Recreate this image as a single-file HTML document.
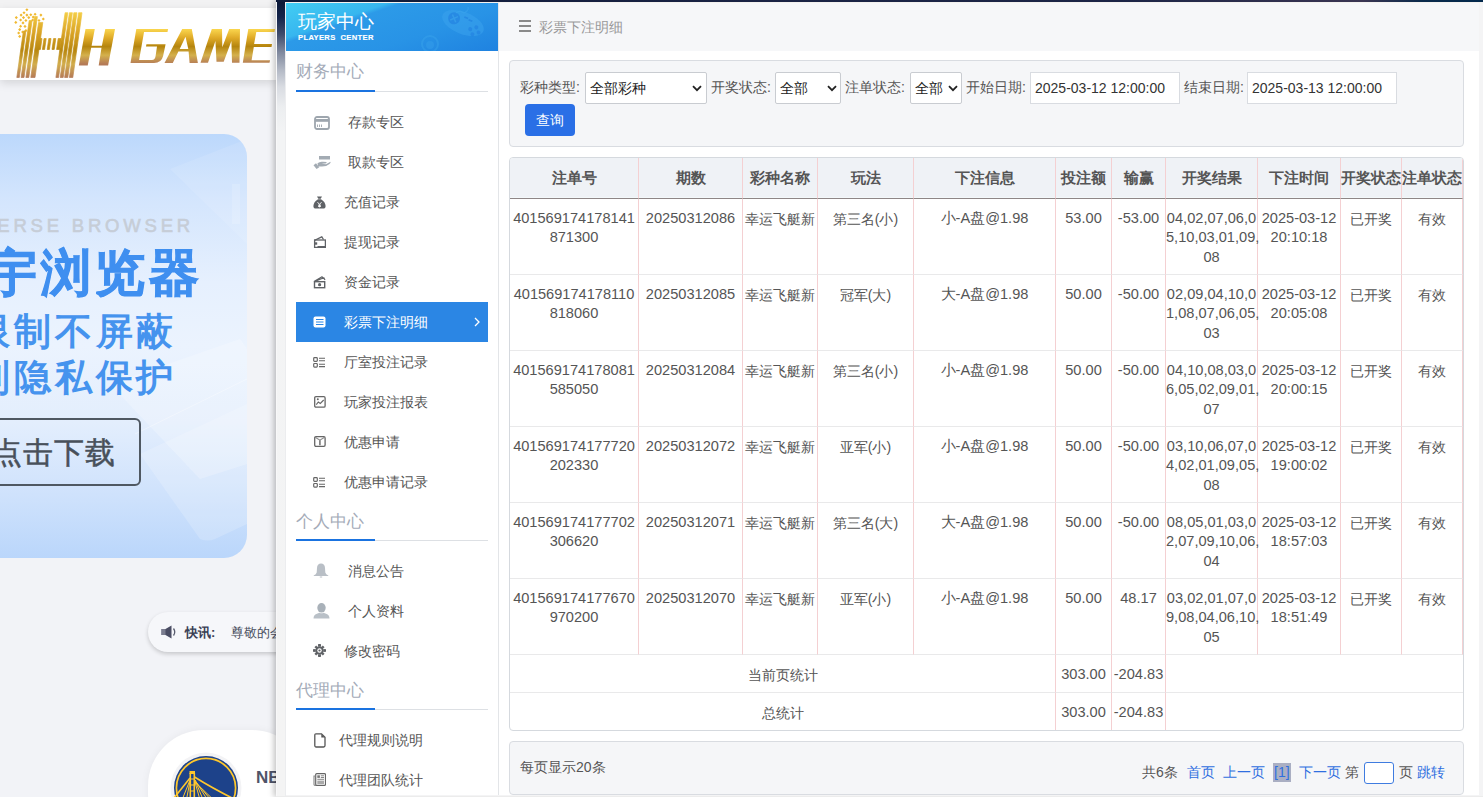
<!DOCTYPE html>
<html><head><meta charset="utf-8">
<style>
*{box-sizing:border-box;margin:0;padding:0}
html,body{width:1484px;height:797px;overflow:hidden;background:#f2f3f7;font-family:"Liberation Sans",sans-serif;color:#555}
.abs{position:absolute}
/* background page */
#topstrip{left:0;top:0;width:276px;height:8px;background:#f2f2f3}
#hdr{left:0;top:8px;width:276px;height:72px;background:#fff;box-shadow:0 3px 9px rgba(0,0,0,.13)}
#banner{left:-30px;top:134px;width:277px;height:424px;border-radius:23px;background:linear-gradient(180deg,#bcd8fc 0%,#d3e5fd 15%,#e6f0fe 35%,#ebf3fe 50%,#e3eefd 68%,#cfe2fc 85%,#bad6fb 100%);overflow:hidden}
#notice{left:148px;top:612px;width:160px;height:40px;border-radius:20px;background:#f6f7fa;box-shadow:0 2px 4px rgba(0,0,0,.18)}
#card{left:148px;top:730px;width:160px;height:120px;border-radius:56px;background:#fff;box-shadow:0 0 8px rgba(0,0,0,.05)}
/* popup */
#frame{left:276px;top:0;width:1207px;height:797px;background:#f4f4f5;box-shadow:-2px 0 6px rgba(0,0,0,.25)}
#frtop{left:276px;top:0;width:1207px;height:2px;background:linear-gradient(90deg,#0e1b3a 0%,#1a2344 40%,#1c2547 70%,#3a3552 90%,#0a2a4c 95%,#02284c 100%)}
#frline{left:276px;top:2px;width:1207px;height:1px;background:#f3f1ee}
#frleft{left:277px;top:2px;width:8px;height:795px;background:linear-gradient(180deg,#0b1836 0px,#14244a 15px,#3e4b6b 32px,#7f889d 50px,#b3b9c5 68px,#d9dce2 85px,#eceef0 105px,#f3f4f5 130px,#f4f4f4 797px)}
#frl1{left:276px;top:2px;width:1px;height:795px;background:#f8f8f9}
#frl2{left:285px;top:3px;width:1px;height:794px;background:#ecedef}
#frbot{left:276px;top:796px;width:1207px;height:1px;background:#ececec}
#frright{left:1483px;top:0;width:1px;height:797px;background:#fff}
#side{left:286px;top:3px;width:212px;height:792px;background:#fff}
#sidehd{left:0;top:0;width:212px;height:48px;background:linear-gradient(161deg,#42cdf3 0%,#37b6ef 29%,#2c9ae8 33%,#2893e6 65%,#1f82e0 100%);overflow:hidden}
#main{left:498px;top:3px;width:981px;height:792px;background:#fff;border-left:1px solid #e3e5e8}
#mainhd{left:0;top:0;width:980px;height:48px;background:#f6f7f9}
.sec{position:absolute;left:10px;font-size:17px;line-height:20px;color:#a4abb8}
.secline{position:absolute;left:10px;width:192px;height:1px;background:#dde0e4}
.secline i{position:absolute;left:0;top:-1px;width:79px;height:2px;background:#1a73e0}
.mi{position:absolute;left:10px;width:192px;height:40px;font-size:14px;color:#555}
.mi span{position:absolute;top:12px;line-height:16px;white-space:nowrap}
.mi svg{position:absolute}
.mi.act{background:#2b86e4;color:#fff}

#hamb{left:519px;top:20px;width:12px;height:12px}
#ptitle{left:539px;top:19px;font-size:14px;line-height:16px;color:#999}
#filter{left:509px;top:60px;width:955px;height:87px;background:#f5f6f8;border:1px solid #d9dce1;border-radius:4px}
.lbl{position:absolute;top:79px;font-size:14px;line-height:16px;color:#555;white-space:nowrap}
.sel{position:absolute;top:72px;height:32px;background:#fff;border:1px solid #c9ccd1;border-radius:2px;font-size:14px;color:#222}
.sel span{position:absolute;left:4px;top:7px;line-height:16px;white-space:nowrap}
.sel svg{position:absolute;top:12px}
.inp{position:absolute;top:72px;height:32px;background:#fff;border:1px solid #d9dce1;font-size:14px;color:#333}
.inp span{position:absolute;left:4px;top:7px;line-height:16px;white-space:nowrap}
#qbtn{left:525px;top:104px;width:50px;height:32px;background:#2a6fe6;border-radius:4px;color:#fff;font-size:14px;line-height:32px;text-align:center}
#tbl{left:509px;top:157px;width:955px;height:574px;border:1px solid #d5d9de;border-radius:4px;overflow:hidden;background:#fff}
#tbl table{border-collapse:separate;border-spacing:0;table-layout:fixed;width:953px}
#tbl th{height:41px;background:#eff2f6;font-size:15px;font-weight:bold;color:#555;border-right:1px solid #f4d0d2;border-bottom:1px solid #8e8686;box-shadow:inset 0 -1px #f3f8fa;text-align:center;padding:0;white-space:nowrap;letter-spacing:0}
#tbl td{height:76px;vertical-align:top;text-align:center;font-size:14.6px;line-height:19.25px;color:#555;border-right:1px solid #f4d0d2;border-bottom:1px solid #e9e9ea;padding:10px 0 0 0;white-space:nowrap;letter-spacing:0}
#tbl tr.sum td{height:38px;vertical-align:middle;padding:0;line-height:16px}
#tbl tr.sum td.nb{border-right:none}
#tbl td.c{font-size:14px;padding-top:11px}
#tbl tr.sum td.c{padding-top:2px}
#tbl tr.last td{height:37px;border-bottom:none}
#pager{left:509px;top:741px;width:955px;height:54px;background:#f5f6f8;border:1px solid #d9dce1;border-radius:4px;font-size:14px;color:#555}
#pager span{position:absolute;top:22px;line-height:16px;white-space:nowrap}
#pager .lk{color:#2f6fe0}
</style></head><body>
<div id="topstrip" class="abs"></div>
<div id="hdr" class="abs"></div>
<svg class="abs" style="left:0;top:0" width="276" height="80" viewBox="0 0 276 80">
<defs>
<linearGradient id="g1" x1="0" y1="9" x2="0" y2="78" gradientUnits="userSpaceOnUse"><stop offset="0" stop-color="#f9d54c"/><stop offset=".35" stop-color="#d9a325"/><stop offset=".6" stop-color="#b8870f"/><stop offset=".8" stop-color="#d2ad4c"/><stop offset="1" stop-color="#b47958"/></linearGradient>
<linearGradient id="g2" x1="0" y1="29" x2="0" y2="64" gradientUnits="userSpaceOnUse"><stop offset="0" stop-color="#fad64e"/><stop offset=".25" stop-color="#e0ab28"/><stop offset=".5" stop-color="#b5850e"/><stop offset=".75" stop-color="#d4b04c"/><stop offset="1" stop-color="#b47a57"/></linearGradient>
</defs>
<g fill="#f0b931"><rect x="25.8" y="8.7" width="2.2" height="2.2" transform="rotate(45 26.9 9.8)"/><rect x="22.9" y="11.6" width="2.2" height="2.2" transform="rotate(45 24.0 12.7)"/><rect x="20.0" y="14.0" width="2.2" height="2.2" transform="rotate(45 21.1 15.1)"/><rect x="25.8" y="14.0" width="2.2" height="2.2" transform="rotate(45 26.9 15.1)"/><rect x="29.7" y="13.6" width="2.2" height="2.2" transform="rotate(45 30.8 14.7)"/><rect x="34.0" y="13.1" width="2.2" height="2.2" transform="rotate(45 35.1 14.2)"/><rect x="39.8" y="14.0" width="2.2" height="2.2" transform="rotate(45 40.9 15.1)"/><rect x="15.2" y="16.5" width="2.2" height="2.2" transform="rotate(45 16.3 17.6)"/><rect x="22.4" y="16.5" width="2.2" height="2.2" transform="rotate(45 23.5 17.6)"/><rect x="27.7" y="16.5" width="2.2" height="2.2" transform="rotate(45 28.8 17.6)"/><rect x="32.1" y="16.0" width="2.2" height="2.2" transform="rotate(45 33.2 17.1)"/><rect x="42.2" y="17.9" width="2.2" height="2.2" transform="rotate(45 43.3 19.0)"/><rect x="19.5" y="18.9" width="2.2" height="2.2" transform="rotate(45 20.6 20.0)"/><rect x="24.8" y="19.4" width="2.2" height="2.2" transform="rotate(45 25.9 20.5)"/><rect x="31.6" y="18.9" width="2.2" height="2.2" transform="rotate(45 32.7 20.0)"/><rect x="37.9" y="19.4" width="2.2" height="2.2" transform="rotate(45 39.0 20.5)"/><rect x="14.7" y="21.3" width="2.2" height="2.2" transform="rotate(45 15.8 22.4)"/><rect x="21.9" y="21.8" width="2.2" height="2.2" transform="rotate(45 23.0 22.9)"/><rect x="19.5" y="25.2" width="2.2" height="2.2" transform="rotate(45 20.6 26.3)"/><rect x="23.9" y="25.3" width="2.2" height="2.2" transform="rotate(45 25.0 26.4)"/><rect x="18.6" y="28.5" width="2.2" height="2.2" transform="rotate(45 19.7 29.6)"/><rect x="24.8" y="29.5" width="2.2" height="2.2" transform="rotate(45 25.9 30.6)"/><rect x="17.6" y="31.9" width="2.2" height="2.2" transform="rotate(45 18.7 33.0)"/><rect x="21.5" y="30.9" width="2.2" height="2.2" transform="rotate(45 22.6 32.0)"/><rect x="18.6" y="35.3" width="2.2" height="2.2" transform="rotate(45 19.7 36.4)"/></g>
<g fill="url(#g1)" stroke="url(#g1)" stroke-width="0.7"><polygon points="16.8,77.5 19.3,77.5 25.9,31 23.4,31"/><polygon points="21.1,77.5 24.0,77.5 32.1,20.5 29.2,20.5"/><polygon points="25.9,77.5 28.8,77.5 37.4,16.6 34.5,16.6"/><polygon points="30.8,77.5 35.0,77.5 42.8,22.4 38.6,22.4"/><polygon points="55.9,77.5 58.6,77.5 67.8,12.7 65.1,12.7"/><polygon points="60.2,77.5 63.2,77.5 72.4,12.7 69.4,12.7"/><polygon points="64.6,77.5 67.8,77.5 77.0,12.7 73.8,12.7"/><polygon points="69.4,77.5 72.8,77.5 82.0,12.7 78.6,12.7"/><polygon points="37.2,49.5 40.4,49.5 42.0,38.5 38.8,38.5"/><polygon points="42.4,49.5 44.6,49.5 46.2,38.5 44.0,38.5"/><polygon points="47.2,49.5 49.4,49.5 51.0,38.5 48.8,38.5"/><polygon points="52.0,49.5 54.2,49.5 55.8,38.5 53.6,38.5"/><polygon points="56.6,49.5 59.8,49.5 61.4,38.5 58.2,38.5"/></g>
<g fill="url(#g2)">
<polygon points="85.5,29.1 94.8,29.1 91.6,45.8 101.9,45.8 105.3,29.1 115,29.1 108.1,65.4 98.7,65.4 101.5,47.7 91.2,47.7 87.7,65.4 78.8,65.4"/>
<path d="M136.3,29 L168.1,29 L167.5,32 L144.05,32 L139.1,59.9 L152,59.9 Q155,59.9 155.6,56 L157,46.6 L146,46.6 L146.4,44.2 L165.6,44.2 L163.1,56 Q161.5,62.9 154,62.9 L130.5,62.9 Z"/>
<path d="M164.5,62.9 L182.2,29 L191.8,29 L197.9,62.9 L189.6,62.9 L188.6,51.6 L178.4,51.6 L172.8,62.9 Z M179.7,49.1 L188.3,49.1 L185.5,36.7 Z" fill-rule="evenodd"/>
<path d="M200.5,62.7 L211.8,29 L222,29 L222.3,47.2 L229.2,29 L240,29 L239.5,62.7 L232,62.7 L231.4,41.1 L223.7,61.8 L216.5,61.8 L215.4,41.1 L208,62.7 Z"/>
<path d="M248.3,29 L275,29 L274.5,32 L256.3,32 L254.1,43.9 L272,43.9 L271.5,46.9 L253.8,46.9 L251.6,60.2 L270.1,60.2 L269.5,62.7 L242.8,62.7 Z"/>
</g>
</svg>
<div id="banner" class="abs">
  <svg class="abs" style="left:0;top:0" width="277" height="424" viewBox="0 0 277 424">
    <path d="M140 250 L270 205 L277 215 L277 330 L230 345 Z" fill="#ffffff" opacity=".22"/>
    <path d="M170 320 L277 270 L277 390 L245 405 Q238 408 230 405 Z" fill="#ffffff" opacity=".18"/>
    <path d="M165 300 L277 245" stroke="#ffffff" stroke-width="1" opacity=".35"/>
    <path d="M200 35 L277 5 L277 110 Z" fill="#ffffff" opacity=".10"/>
    <rect x="262" y="50" width="8" height="40" fill="#ffffff" opacity=".15"/>
  </svg>
  <div class="abs" style="right:53px;top:82px;font-size:18.5px;line-height:20px;font-weight:normal;-webkit-text-stroke:.6px #c6cdd7;color:#c6cdd7;letter-spacing:3.8px;white-space:nowrap">UNIVERSE BROWSER</div>
  <div class="abs" style="right:44px;top:111px;font-size:50px;line-height:56px;font-weight:900;color:#3f8ff0;white-space:nowrap;letter-spacing:4px;-webkit-text-stroke:1px #3f8ff0">元宇浏览器</div>
  <div class="abs" style="right:70px;top:176px;font-size:37px;line-height:44px;font-weight:bold;color:#4593ee;white-space:nowrap;letter-spacing:3.7px;white-space:nowrap">无限制不屏蔽</div>
  <div class="abs" style="right:70px;top:222px;font-size:37px;line-height:44px;font-weight:bold;color:#4593ee;white-space:nowrap;letter-spacing:3.7px;white-space:nowrap">强到隐私保护</div>
  <div class="abs" style="left:0;top:284px;width:171px;height:68px;border:2px solid #4f5862;border-radius:6px"></div>
  <div class="abs" style="right:131px;top:300px;font-size:30px;line-height:38px;font-weight:500;color:#48505a;-webkit-text-stroke:.5px #48505a;white-space:nowrap;letter-spacing:1px">点击下载</div>
</div>

<div id="notice" class="abs">
  <svg class="abs" style="left:13px;top:13px" width="17" height="14" viewBox="0 0 17 14"><path d="M0.5 4 H4.5 L10.5 0.5 V13.5 L4.5 10 H0.5Z" fill="#4a4d63"/><rect x="0.5" y="4" width="4" height="6" fill="#7a7d8f"/><path d="M12.5 3.5 Q15 7 12.5 10.5" fill="none" stroke="#585c6e" stroke-width="1.3"/></svg>
  <div class="abs" style="left:37px;top:13px;font-size:13px;line-height:16px;font-weight:bold;color:#3a3f55;white-space:nowrap">快讯:</div>
  <div class="abs" style="left:83px;top:13px;font-size:13px;line-height:16px;color:#4a4f60;white-space:nowrap">尊敬的会员</div>
</div>
<div id="card" class="abs">
  <svg class="abs" style="left:22px;top:22px" width="72" height="72" viewBox="0 0 72 72">
    <circle cx="36" cy="36" r="35.5" fill="#f3f3f5"/>
    <circle cx="36" cy="36" r="32" fill="#1d428a"/>
    <circle cx="36" cy="36" r="29.6" fill="none" stroke="#ffc72c" stroke-width="1.7"/>
    <g stroke="#ffc72c" fill="none">
      <path d="M20.3 21 V60 M24.3 21 V60" stroke-width="1.6"/>
      <path d="M20.3 27 h4 M20.3 33 h4 M20.3 39 h4" stroke-width="1.2"/>
      <path d="M24.5 25 Q42 36 66 48" stroke-width="1.6"/>
      <path d="M20 26 Q12 36 4 46" stroke-width="1.6"/>
      <path d="M25 28 L34 50 M25 28 L40 52 M25 29 L46 54 M25 30 L52 56 M25 30 L30 48" stroke-width="1"/>
      <path d="M20 28 L12 48 M20 29 L16 50" stroke-width="1"/>
    </g>
    <rect x="19.5" y="19" width="5.5" height="3" fill="#ffc72c"/>
  </svg>
  <div class="abs" style="left:108px;top:38px;font-size:17px;line-height:20px;font-weight:bold;color:#4f5468;white-space:nowrap">NBA</div>
</div>


<div id="frame" class="abs"></div><div id="frtop" class="abs"></div><div id="frline" class="abs"></div><div id="frleft" class="abs"></div><div id="frl1" class="abs"></div><div id="frl2" class="abs"></div><div id="frbot" class="abs"></div><div id="frright" class="abs"></div>
<div id="side" class="abs">
  <div id="sidehd" class="abs">
    <svg class="abs" style="left:0;top:0" width="212" height="48" viewBox="0 0 212 48">
      <g transform="translate(177,20) rotate(22)" opacity="1">
        <ellipse cx="0" cy="0" rx="22" ry="11" fill="#3aa3ec" opacity=".55"/>
        <circle cx="-10" cy="-1" r="6" fill="#2486e2" opacity=".8"/>
        <path d="M-13 -4 L-7 2 M-7 -4 L-13 2" stroke="#3aa3ec" stroke-width="1.5" opacity=".7"/>
        <circle cx="9" cy="3" r="2" fill="#2486e2" opacity=".8"/><circle cx="14" cy="-1" r="2" fill="#2486e2" opacity=".8"/>
        <circle cx="13" cy="7" r="2" fill="#2486e2" opacity=".8"/><circle cx="18" cy="3" r="2" fill="#2486e2" opacity=".8"/>
        <path d="M-1 -6 h4 M4 -5 h4" stroke="#2486e2" stroke-width="1.6" opacity=".8"/>
      </g>
      <path d="M170 10 q4 -3 6 -1 q2 2 5 -1 q2 -2 1 -4" fill="none" stroke="#3aa3ec" stroke-width="1.2" opacity=".6"/>
      <circle cx="144" cy="41" r="8" fill="none" stroke="#3aa3ec" stroke-width="2" opacity=".45"/>
      <circle cx="144" cy="42" r="4" fill="#3aa3ec" opacity=".4"/>
    </svg>
    <div class="abs" style="left:12px;top:8px;font-size:19px;color:#fff;line-height:22px">玩家中心</div>
    <div class="abs" style="left:12px;top:30px;font-size:7.6px;line-height:9px;font-weight:bold;-webkit-text-stroke:.15px #fff;color:#fff;letter-spacing:.35px;white-space:nowrap">PLAYERS&nbsp; CENTER</div>
  </div>
  <div class="sec" style="top:59px">财务中心</div>
  <div class="secline" style="top:88px"><i></i></div>
  <!-- items: y centers 122,162,... (abs page) -> side top 3 -->
  <div class="mi" style="top:99px"><span style="left:52px">存款专区</span><svg style="left:18px;top:14px" width="16" height="14" viewBox="0 0 16 14"><rect x="1" y="1" width="14" height="12" rx="2" fill="none" stroke="#9ea6ae" stroke-width="1.8"/><rect x="1" y="3" width="14" height="2.8" fill="#9ea6ae"/><path d="M3.5 8.5v2.5M5.5 8.5v2.5M7.5 8.5v2.5" stroke="#9ea6ae" stroke-width="0.9"/></svg></div>
  <div class="mi" style="top:139px"><span style="left:52px">取款专区</span><svg style="left:17px;top:14px" width="18" height="13" viewBox="0 0 18 13"><rect x="6" y="0" width="11" height="3.5" fill="#a3abb3"/><path d="M4.5 7.2 Q7 5.2 10 5.8 L13.5 6 Q14 7 12.5 7.6 L8.5 7.8 L13 8.2 L17.5 5.8 Q18 6.6 16.5 8 Q13.5 10.5 9 10.6 L5 10.5 Z" fill="#a3abb3"/><path d="M0.5 9.2 L3 7.3 L6.3 11.3 L3.6 13 Z" fill="#a3abb3"/></svg></div>
  <div class="mi" style="top:179px"><span style="left:48px">充值记录</span><svg style="left:17px;top:14px" width="13" height="13" viewBox="0 0 13 13"><path d="M4 0.5h5l-1.3 2.3h-2.4z M5 3.2h3 Q12.5 6 12.6 10 Q12.6 12.6 10 12.6H3Q0.4 12.6 0.4 10Q0.5 6 5 3.2z" fill="#5f6266"/><path d="M4.5 6.2 L6.5 8.4 L8.5 6.2 M6.5 8.4v3 M5 9.2h3 M5 10.4h3" stroke="#fff" stroke-width="0.9" fill="none"/></svg></div>
  <div class="mi" style="top:219px"><span style="left:48px">提现记录</span><svg style="left:17px;top:14px" width="13" height="12" viewBox="0 0 13 12"><path d="M1.2 4.5 L8.8 0.8 L10.5 3.5" fill="none" stroke="#5f6266" stroke-width="1.3"/><rect x="1.6" y="4" width="10.8" height="7.4" fill="none" stroke="#5f6266" stroke-width="1.3"/><rect x="1" y="6.3" width="3.2" height="2.4" fill="#5f6266"/><path d="M4.5 10.6h7.5" stroke="#5f6266" stroke-width="1.2"/></svg></div>
  <div class="mi" style="top:259px"><span style="left:48px">资金记录</span><svg style="left:17px;top:14px" width="13" height="13" viewBox="0 0 13 13"><path d="M1 5.5 L9 0.8 L10.5 3 M3 5 L10.8 1.8 L12 4" fill="none" stroke="#5f6266" stroke-width="1.2"/><rect x="0.8" y="5" width="11.6" height="7.4" fill="#5f6266"/><rect x="2.2" y="6.4" width="8.8" height="4.6" fill="#fff"/><circle cx="6.6" cy="8.7" r="1.6" fill="#5f6266"/></svg></div>
  <div class="mi act" style="top:299px"><span style="left:48px">彩票下注明细</span><svg style="left:17px;top:14px" width="13" height="12" viewBox="0 0 13 12"><rect x="0.5" y="0.5" width="12" height="11" rx="2" fill="#fff"/><path d="M3 3.5h7.5M3 6h7.5M3 8.5h7.5" stroke="#2b86e4" stroke-width="1"/></svg><svg style="left:178px;top:15px" width="6" height="10" viewBox="0 0 6 10"><path d="M1 1 L5 5 L1 9" fill="none" stroke="#fff" stroke-width="1.3"/></svg></div>
  <div class="mi" style="top:339px"><span style="left:48px">厅室投注记录</span><svg style="left:17px;top:15px" width="13" height="11" viewBox="0 0 13 11"><rect x="0.7" y="0.7" width="3.6" height="3.6" rx="0.8" fill="none" stroke="#666" stroke-width="1.2"/><rect x="0.7" y="6.5" width="3.6" height="3.6" rx="0.8" fill="none" stroke="#666" stroke-width="1.2"/><path d="M6 1.2h6M6 3.8h6M6 7.2h6M6 9.6h6" stroke="#666" stroke-width="1.1"/></svg></div>
  <div class="mi" style="top:379px"><span style="left:48px">玩家投注报表</span><svg style="left:18px;top:14px" width="12" height="12" viewBox="0 0 12 12"><rect x="0.7" y="0.7" width="10.4" height="10.4" rx="1.2" fill="none" stroke="#666" stroke-width="1.3"/><path d="M2.3 8.6 L4.3 6 L6.3 7.5 L9.7 4" fill="none" stroke="#666" stroke-width="1.1"/><circle cx="3.8" cy="3.3" r="1" fill="#666"/></svg></div>
  <div class="mi" style="top:419px"><span style="left:48px">优惠申请</span><svg style="left:18px;top:14px" width="12" height="11" viewBox="0 0 12 11"><rect x="0.7" y="0.7" width="10.4" height="9.6" rx="1.2" fill="none" stroke="#666" stroke-width="1.3"/><path d="M1.2 1.2 L5.9 4.2 L10.6 1.2" fill="none" stroke="#888" stroke-width="1.1"/><path d="M5.9 4.2 v5" stroke="#777" stroke-width="1.6"/></svg></div>
  <div class="mi" style="top:459px"><span style="left:48px">优惠申请记录</span><svg style="left:17px;top:15px" width="13" height="11" viewBox="0 0 13 11"><rect x="0.7" y="0.7" width="3.6" height="3.6" rx="0.8" fill="none" stroke="#666" stroke-width="1.2"/><rect x="0.7" y="6.5" width="3.6" height="3.6" rx="0.8" fill="none" stroke="#666" stroke-width="1.2"/><path d="M6 1.2h6M6 3.8h6M6 7.2h6M6 9.6h6" stroke="#666" stroke-width="1.1"/></svg></div>
  <div class="sec" style="top:509px">个人中心</div>
  <div class="secline" style="top:537px"><i></i></div>
  <div class="mi" style="top:548px"><span style="left:52px">消息公告</span><svg style="left:17px;top:12px" width="16" height="15" viewBox="0 0 16 15"><path d="M8 0.5 Q11.8 0.5 12 5 L12.3 9.5 Q12.8 11.5 15.3 12.5 L15.3 13 L0.7 13 L0.7 12.5 Q3.2 11.5 3.7 9.5 L4 5 Q4.2 0.5 8 0.5z" fill="#b9bfc6"/><path d="M6.8 14h2.4" stroke="#b9bfc6" stroke-width="1"/></svg></div>
  <div class="mi" style="top:588px"><span style="left:52px">个人资料</span><svg style="left:17px;top:12px" width="17" height="16" viewBox="0 0 17 16"><ellipse cx="8.5" cy="4.8" rx="4.2" ry="4.8" fill="#a9b1b9"/><path d="M0.5 15.5 Q0.5 11.5 4.5 10.5 L6.5 9.7 Q8.5 10.7 10.5 9.7 L12.5 10.5 Q16.5 11.5 16.5 15.5z" fill="#b9c0c7"/></svg></div>
  <div class="mi" style="top:628px"><span style="left:48px">修改密码</span><svg style="left:17px;top:13px" width="13" height="13" viewBox="0 0 13 13"><g fill="#5f6266"><circle cx="6.5" cy="6.5" r="4.3"/><path d="M5.2 0h2.6l.3 2.5h-3.2zM5.2 13h2.6l.3-2.5h-3.2zM0 5.2v2.6l2.5.3v-3.2zM13 5.2v2.6l-2.5.3v-3.2z"/><path d="M1.4 3.2 L3.2 1.4 L4.8 3.4 L3.4 4.8z M11.6 9.8 L9.8 11.6 L8.2 9.6 L9.6 8.2z M9.8 1.4 L11.6 3.2 L9.6 4.8 L8.2 3.4z M3.2 11.6 L1.4 9.8 L3.4 8.2 L4.8 9.6z"/></g><circle cx="6.5" cy="6.5" r="2.2" fill="#fff"/><circle cx="6.5" cy="6.5" r="1.1" fill="#5f6266"/></svg></div>
  <div class="sec" style="top:678px">代理中心</div>
  <div class="secline" style="top:706px"><i></i></div>
  <div class="mi" style="top:717px"><span style="left:43px">代理规则说明</span><svg style="left:18px;top:13px" width="12" height="15" viewBox="0 0 12 15"><path d="M2 0.8 H7.5 L11 4.3 V12.6 Q11 14 9.6 14 H2.2 Q0.8 14 0.8 12.6 V2.2 Q0.8 0.8 2 0.8z" fill="none" stroke="#555" stroke-width="1.3"/><path d="M7.3 1 V4.5 H10.8z" fill="#555"/></svg></div>
  <div class="mi" style="top:757px"><span style="left:43px">代理团队统计</span><svg style="left:17px;top:13px" width="13" height="13" viewBox="0 0 13 13"><rect x="2.7" y="0.6" width="9.8" height="11.8" rx="1" fill="none" stroke="#666" stroke-width="1.2"/><path d="M2.7 3 H1 V11.5 Q1 12.4 2 12.4 H3" fill="none" stroke="#888" stroke-width="1.1"/><rect x="4.3" y="2.3" width="2.6" height="2.6" fill="#777"/><path d="M7.8 2.8h3.2M7.8 4.5h3.2M4.3 6.3h6.7" stroke="#777" stroke-width="0.9"/><rect x="4.3" y="7.6" width="6.7" height="3.4" fill="#aaa"/></svg></div>
</div>
<div id="main" class="abs">
  <div id="mainhd" class="abs"></div>
</div>

<svg id="hamb" class="abs" width="12" height="12" viewBox="0 0 12 12"><path d="M0 1h12M0 6h12M0 11h12" stroke="#8a8a8a" stroke-width="2"/></svg>
<div id="ptitle" class="abs">彩票下注明细</div>
<div id="filter" class="abs"></div>
<div class="lbl" style="left:520px">彩种类型:</div>
<div class="sel" style="left:585px;width:122px"><span>全部彩种</span><svg style="left:106px" width="10" height="7" viewBox="0 0 10 7"><path d="M1 1.2 L5 5.2 L9 1.2" fill="none" stroke="#222" stroke-width="1.8"/></svg></div>
<div class="lbl" style="left:711px">开奖状态:</div>
<div class="sel" style="left:775px;width:66px"><span>全部</span><svg style="left:51px" width="10" height="7" viewBox="0 0 10 7"><path d="M1 1.2 L5 5.2 L9 1.2" fill="none" stroke="#222" stroke-width="1.8"/></svg></div>
<div class="lbl" style="left:845px">注单状态:</div>
<div class="sel" style="left:910px;width:52px"><span>全部</span><svg style="left:37px" width="10" height="7" viewBox="0 0 10 7"><path d="M1 1.2 L5 5.2 L9 1.2" fill="none" stroke="#222" stroke-width="1.8"/></svg></div>
<div class="lbl" style="left:966px">开始日期:</div>
<div class="inp" style="left:1030px;width:150px"><span>2025-03-12 12:00:00</span></div>
<div class="lbl" style="left:1184px">结束日期:</div>
<div class="inp" style="left:1247px;width:150px"><span>2025-03-13 12:00:00</span></div>
<div id="qbtn" class="abs">查询</div>
<div id="tbl" class="abs"><table><colgroup><col style="width:129px"><col style="width:104px"><col style="width:75px"><col style="width:96px"><col style="width:142px"><col style="width:56px"><col style="width:54px"><col style="width:92px"><col style="width:83px"><col style="width:61px"><col style="width:61px"></colgroup><tr><th>注单号</th><th>期数</th><th>彩种名称</th><th>玩法</th><th>下注信息</th><th>投注额</th><th>输赢</th><th>开奖结果</th><th>下注时间</th><th>开奖状态</th><th>注单状态</th></tr>
<tr><td>401569174178141<br>871300</td><td>20250312086</td><td class="c">幸运飞艇新</td><td class="c">第三名(小)</td><td>小-A盘@1.98</td><td>53.00</td><td>-53.00</td><td>04,02,07,06,0<br>5,10,03,01,09,<br>08</td><td>2025-03-12<br>20:10:18</td><td class="c">已开奖</td><td class="c">有效</td></tr>
<tr><td>401569174178110<br>818060</td><td>20250312085</td><td class="c">幸运飞艇新</td><td class="c">冠军(大)</td><td>大-A盘@1.98</td><td>50.00</td><td>-50.00</td><td>02,09,04,10,0<br>1,08,07,06,05,<br>03</td><td>2025-03-12<br>20:05:08</td><td class="c">已开奖</td><td class="c">有效</td></tr>
<tr><td>401569174178081<br>585050</td><td>20250312084</td><td class="c">幸运飞艇新</td><td class="c">第三名(小)</td><td>小-A盘@1.98</td><td>50.00</td><td>-50.00</td><td>04,10,08,03,0<br>6,05,02,09,01,<br>07</td><td>2025-03-12<br>20:00:15</td><td class="c">已开奖</td><td class="c">有效</td></tr>
<tr><td>401569174177720<br>202330</td><td>20250312072</td><td class="c">幸运飞艇新</td><td class="c">亚军(小)</td><td>小-A盘@1.98</td><td>50.00</td><td>-50.00</td><td>03,10,06,07,0<br>4,02,01,09,05,<br>08</td><td>2025-03-12<br>19:00:02</td><td class="c">已开奖</td><td class="c">有效</td></tr>
<tr><td>401569174177702<br>306620</td><td>20250312071</td><td class="c">幸运飞艇新</td><td class="c">第三名(大)</td><td>大-A盘@1.98</td><td>50.00</td><td>-50.00</td><td>08,05,01,03,0<br>2,07,09,10,06,<br>04</td><td>2025-03-12<br>18:57:03</td><td class="c">已开奖</td><td class="c">有效</td></tr>
<tr><td>401569174177670<br>970200</td><td>20250312070</td><td class="c">幸运飞艇新</td><td class="c">亚军(小)</td><td>小-A盘@1.98</td><td>50.00</td><td>48.17</td><td>03,02,01,07,0<br>9,08,04,06,10,<br>05</td><td>2025-03-12<br>18:51:49</td><td class="c">已开奖</td><td class="c">有效</td></tr>
<tr class="sum"><td colspan="5" class="c">当前页统计</td><td>303.00</td><td>-204.83</td><td colspan="4" class="nb"></td></tr>
<tr class="sum last"><td colspan="5" class="c">总统计</td><td>303.00</td><td>-204.83</td><td colspan="4" class="nb"></td></tr>
</table></div>
<div id="pager" class="abs">
<span style="left:10px;top:17px">每页显示20条</span>
<span style="left:632px">共6条</span>
<span class="lk" style="left:677px">首页</span>
<span class="lk" style="left:713px">上一页</span>
<span class="lk" style="left:763px;background:#aaafc3;padding:1px 1px 0;top:21px;height:19px">[1]</span>
<span class="lk" style="left:789px">下一页</span>
<span style="left:835px">第</span>
<div style="position:absolute;left:854px;top:20px;width:30px;height:22px;border:1px solid #3f7ce0;border-radius:3px;background:#fff"></div>
<span style="left:889px">页</span>
<span class="lk" style="left:907px">跳转</span>
</div>
</body></html>
